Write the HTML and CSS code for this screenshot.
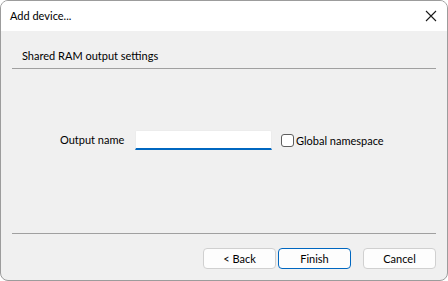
FILE: index.html
```html
<!DOCTYPE html>
<html>
<head>
<meta charset="utf-8">
<link rel="stylesheet" href="styles.css">
</head>
<body>
<div class="window">
  <div class="titlebar">
    <span class="title">Add device...</span>
    <svg class="close" width="12" height="12" viewBox="0 0 12 12"><path d="M1 1 L11 11 M11 1 L1 11" stroke="#1a1a1a" stroke-width="1.1" fill="none"/></svg>
  </div>
  <div class="body">
    <div class="heading">Shared RAM output settings</div>
    <div class="rule"></div>
    <div class="form">
      <span class="label">Output name</span>
      <div class="input"></div>
      <label class="check"><span class="box"></span><span>Global namespace</span></label>
    </div>
    <div class="rule"></div>
    <div class="buttons">
      <div class="btn">&lt; Back</div>
      <div class="btn default">Finish</div>
      <div class="btn cancel">Cancel</div>
    </div>
  </div>
</div>
</body>
</html>
```
FILE: styles.css
```css
html, body { margin: 0; padding: 0; background: #ffffff; }
body { font-family: Lato, "Liberation Sans", sans-serif; font-size: 11px; color: #000; }
.window {
  width: 448px; height: 281px; box-sizing: border-box;
  border: 1px solid #9c9c9c; border-radius: 8px; overflow: hidden;
  background: #f0f0f0; display: flex; flex-direction: column;
}
.titlebar {
  height: 30px; flex: none; background: #ffffff;
  display: flex; align-items: center; justify-content: space-between;
  padding: 0 10px 0 9px;
}
.title { line-height: 16px; }
.close { display: block; }
.body { flex: 1; padding: 0 11px; display: flex; flex-direction: column; }
.heading { padding: 17px 0 0 10px; height: 20px; line-height: 16px; white-space: nowrap; }
.rule { height: 1px; background: #a0a0a0; flex: none; }
.form {
  margin-top: 61px; height: 20px; display: flex; align-items: center;
  padding-left: 48px; margin-bottom: 83px; white-space: nowrap;
}
.label { width: 75px; line-height: 16px; }
.input {
  width: 137px; height: 20px; box-sizing: border-box; background: #fff;
  border: 1px solid #ececec; border-bottom: 2px solid #0067c0; border-radius: 2px 2px 0 0;
}
.check { display: flex; align-items: center; margin-left: 9px; }
.box {
  width: 13px; height: 13px; box-sizing: border-box; border: 1px solid #5e5e5e;
  border-radius: 3px; background: #fff; margin-right: 2px;
}
.buttons { display: flex; justify-content: flex-end; margin-top: 14px; }
.btn {
  width: 73px; height: 21px; box-sizing: border-box; background: #fdfdfd;
  border: 1px solid #d0d0d0; border-radius: 4px; display: flex;
  align-items: center; justify-content: center; line-height: 16px; margin-left: 2px;
}
.btn.default { border-color: #0067c0; }
.btn.cancel { margin-left: 12px; }
```
